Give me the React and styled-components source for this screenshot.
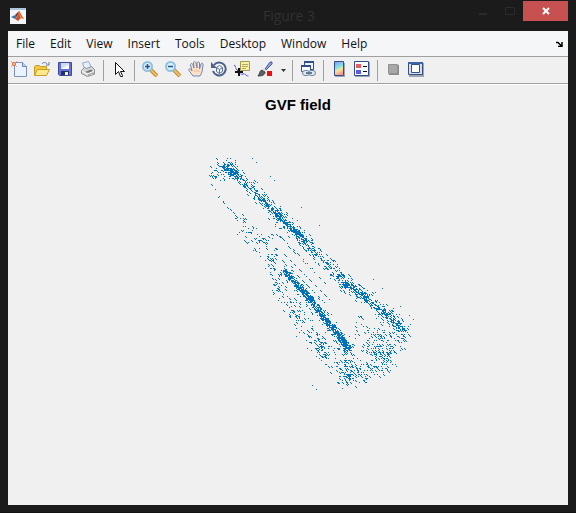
import React from "react";
import styled, { createGlobalStyle } from "styled-components";

const menus = ["File", "Edit", "View", "Insert", "Tools", "Desktop", "Window", "Help"];

/* small seeded generator so that the field looks the same on every load */
const createRandom = (seed) => () => {
  seed = (seed * 1664525 + 1013904223) % 4294967296;
  return seed / 4294967296;
};

/* each band: its points, the spread across it, the number of arrows */
const bands = [
  { points: [[44, 15], [58, 24], [95, 61], [127, 91]], spread: 4, count: 330 },
  { points: [[48, 12], [95, 59], [127, 91]], spread: 10, count: 200 },
  { points: [[95, 61], [127, 91]], spread: 5, count: 80 },
  { points: [[127, 91], [150, 114], [168, 134]], spread: 8, count: 170 },
  { points: [[165, 132], [190, 149], [225, 179]], spread: 5, count: 260 },
  { points: [[165, 131], [190, 149], [228, 181]], spread: 12, count: 150 },
  { points: [[106, 120], [119, 134], [134, 152], [147, 169], [162, 187], [171, 199]], spread: 4, count: 620 },
  { points: [[104, 117], [134, 152], [172, 200]], spread: 9, count: 150 },
  { points: [[36, 18], [60, 22]], spread: 13, count: 75 },
  { points: [[34, 12], [32, 24], [38, 29]], spread: 3, count: 12 },
  { points: [[34, 33], [40, 46], [50, 57], [60, 65]], spread: 3, count: 12 },
  { points: [[60, 65], [70, 82], [84, 94], [96, 108]], spread: 11, count: 75 },
  { points: [[92, 108], [99, 136], [116, 162], [136, 190], [148, 206]], spread: 9, count: 105 },
  { points: [[112, 158], [136, 190], [153, 205]], spread: 13, count: 90 },
  { points: [[150, 203], [164, 222], [174, 232]], spread: 14, count: 65 },
  { points: [[166, 226], [193, 222], [212, 206]], spread: 13, count: 105 },
  { points: [[170, 196], [172, 226]], spread: 14, count: 80 },
  { points: [[214, 204], [227, 188], [226, 176]], spread: 8, count: 45 },
  { points: [[190, 206], [210, 190]], spread: 18, count: 115 },
  { points: [[176, 176], [220, 186]], spread: 19, count: 60 },
  { points: [[86, 90], [102, 78]], spread: 8, count: 14 },
];

/* start of each diagonal streak between the edges, and its length */
const streaks = [
  [104, 88, 34], [110, 96, 44], [106, 104, 46], [104, 110, 46],
  [120, 93, 40], [96, 128, 30], [95, 134, 30], [104, 150, 30],
];

const strays = [
  [74, 8], [78, 12], [92, 26], [96, 30], [123, 57], [141, 75], [195, 129],
  [204, 138], [222, 156], [231, 165], [235, 169], [134, 235], [138, 239],
];

const buildField = () => {
  const random = createRandom(29);
  const pixels = new Set();
  const mark = (x, y) => pixels.add(`M${x} ${y}h1v1h-1z`);

  bands.forEach(({ points, spread, count }) => {
    for (let i = 0; i < count; i++) {
      const t = random() * (points.length - 1);
      const k = Math.floor(t);
      const [ax, ay] = points[k];
      const [bx, by] = points[k + 1];
      const length = Math.hypot(bx - ax, by - ay);
      const side = (random() + random() - 1) * spread;
      const x = ax + (bx - ax) * (t - k) + ((by - ay) / length) * side;
      const y = ay + (by - ay) * (t - k) - ((bx - ax) / length) * side;
      /* the wide bands are thin enough for the rows of the arrows to show */
      const step = spread > 6 ? 2 : 1;
      const column = Math.round(x);
      const row = Math.round(y / step) * step;
      mark(column, row);
      if (random() > 0.6) mark(column + 1, row + 1);
    }
  });

  streaks.forEach(([x, y, length]) => {
    for (let i = 0; i < length; i++) {
      if (i % 5 < 3 && random() > 0.3) mark(x + i, y + i);
    }
  });

  strays.forEach(([x, y]) => mark(x, y));
  return [...pixels].join("");
};

const fieldPath = buildField();

const MatlabLogo = () => (
  <svg width="16" height="16" viewBox="0 0 16 16" aria-hidden="true">
    <path d="M0 0h16v16H0z" fill="#f3f5f7" />
    <path d="M0 0h16v2H0z" fill="#a9c4dc" />
    <path d="M1 9l4-2 2 2-2 2z" fill="#3b78a8" />
    <path d="M5 7l4-4-2 6z" fill="#6e3a3a" />
    <path d="M5 11l2-2 2-6c1 0 2 4 5 8l-3-1-3 3z" fill="#d5532a" />
    <path d="M9 3c1 1 1 5 4 8l-3-2z" fill="#f09a3c" />
  </svg>
);

const NewIcon = () => (
  <svg width="16" height="16" viewBox="0 0 16 16" aria-hidden="true">
    <path d="M3.5 1.5h8l4 4v10h-12z" fill="#eaf3ff" stroke="#7d93bd" />
    <path d="M11.5 1.5v4h4" fill="#c3d7f5" stroke="#6d85b5" />
    <path d="M0 0l2 2M6 0L4 2M0 6l2-2M6 6L4 4" stroke="#f0a080" />
    <circle cx="3" cy="3" r="1.5" fill="#ffd9a0" stroke="#df6434" />
  </svg>
);

const OpenIcon = () => (
  <svg width="16" height="16" viewBox="0 0 16 16" aria-hidden="true">
    <path d="M.5 14.5v-9l1-1h4l1 1h6v3" fill="#f1c83f" stroke="#c39c2a" />
    <path d="M.5 14.5l3-6h12l-3 6z" fill="#ffe98a" stroke="#c99d26" />
    <path d="M8 3c1-2 4-2 5 0m2-2v3h-3" fill="none" stroke="#6178a3" />
  </svg>
);

const SaveIcon = () => (
  <svg width="16" height="16" viewBox="0 0 16 16" aria-hidden="true">
    <path d="M1.5 1.5h13v13h-12l-1-1z" fill="#6672d4" stroke="#3d499c" />
    <path d="M4 2h8v6H4z" fill="#d0dbfa" />
    <path d="M4 8l8-5v5z" fill="#f8faff" />
    <path d="M4 10h8v4H4z" fill="#263267" />
    <path d="M8 11h3v3H8z" fill="#f2f3fc" />
  </svg>
);

const PrintIcon = () => (
  <svg width="16" height="16" viewBox="0 0 16 16" aria-hidden="true">
    <path d="M4.5 8l-2-6 6-1.5 3 6" fill="#e5f0ff" stroke="#9aa9c4" />
    <path d="M1.5 9.5l3-3 2 1 5-2 3 3v4l-7 3-6-3z" fill="#d4d5d6" stroke="#8d8f91" />
    <path d="M2 10l5 3 7-3" fill="none" stroke="#fff" />
    <path d="M5 11l6-2.5 2 1.5-5 2z" fill="#74777c" />
    <path d="M8 14l5-2 2 1-6 2z" fill="#f5f5f5" stroke="#9b9b9b" />
  </svg>
);

const PointerIcon = () => (
  <svg width="16" height="16" viewBox="0 0 16 16" aria-hidden="true">
    <path d="M4.5 1.5v12l3-3 2 5h2v-1l-2-4h4z" fill="#fff" stroke="#111" />
  </svg>
);

const ZoomIcon = ({ plus }) => (
  <svg width="16" height="16" viewBox="0 0 16 16" aria-hidden="true">
    <path d="M9 9l6 6" stroke="#b88a48" strokeWidth="4" />
    <path d="M9 9l6 6" stroke="#f4be55" strokeWidth="2" />
    <circle cx="5.5" cy="5.5" r="4.5" fill="#d8f3ff" stroke="#8fc0e0" strokeWidth="2" />
    <path d={plus ? "M3 5.5h5M5.5 3v5" : "M3 5.5h5"} stroke="#2f4c96" strokeWidth="1.5" />
  </svg>
);

const HandIcon = () => (
  <svg width="16" height="16" viewBox="0 0 16 16" aria-hidden="true">
    <path
      d="M5 15L1 9.5C0 8 2 7 3 8.5L4 10 2.5 4c0-2 2-2 2.5 0l1 3-.5-5c0-2 2-2 2.5 0l1 5V2c.5-2 2.5-1 2.5 0v6l1.5-5c1-1.5 2.5-.5 2 1L14 11l-2 4z"
      fill="#ffe2c5"
      stroke="#6d88b8"
    />
    <path d="M6 9l1 2M9 8v3M11 9v2" stroke="#e8bd9c" />
  </svg>
);

const RotateIcon = () => (
  <svg width="16" height="16" viewBox="0 0 16 16" aria-hidden="true">
    <path d="M3 4a6.5 6.5 0 1 1-1 6" fill="none" stroke="#4c6389" strokeWidth="2" />
    <path d="M0 1v6h6z" fill="#4c6389" />
    <path d="M5.5 6.5l3-2 3 2v4l-3 2-3-2zm0 0l3 2 3-2m-3 2v4" fill="#edf4fc" stroke="#5b7196" />
  </svg>
);

const DataCursorIcon = () => (
  <svg width="16" height="16" viewBox="0 0 16 16" aria-hidden="true">
    <path d="M6.5.5h9v9h-9z" fill="#f8efa0" stroke="#a19d52" />
    <path d="M8 3.5h6M8 5.5h6M8 7.5h4" stroke="#b6ab5c" />
    <path d="M0 4c2 1 1 3 3 5s3 5 6 4 3 3 6 2" fill="none" stroke="#2c2cf0" strokeDasharray="3 1" />
    <path d="M1 11h8M5 7v8" stroke="#111" strokeWidth="2" />
  </svg>
);

const BrushIcon = () => (
  <svg width="16" height="16" viewBox="0 0 16 16" aria-hidden="true">
    <path d="M8 8l5-7h2v2L9 9z" fill="#8ea2e2" stroke="#4d5da3" />
    <path d="M1 15c2-2 1-5 4-6l3 2c0 3-3 4-7 4z" fill="#5f6163" stroke="#404244" />
    <path d="M6 8l3 2" stroke="#dedede" strokeWidth="2" />
    <path d="M10 10h5v5h-5z" fill="#f00d0d" />
  </svg>
);

const LinkIcon = () => (
  <svg width="16" height="16" viewBox="0 0 16 16" aria-hidden="true">
    <path d="M4.5.5h9v8h-9z" fill="#eef3fb" stroke="#344f88" />
    <path d="M4 0h10v2H4z" fill="#344f88" />
    <path d="M1.5 4.5h9v6h-9z" fill="#f7fbff" stroke="#344f88" />
    <path d="M1 4h10v2H1z" fill="#344f88" />
    <rect x="2.5" y="9.5" width="7" height="5" rx="2.5" fill="#dce6ef" stroke="#7289a1" />
    <rect x="8.5" y="9.5" width="7" height="5" rx="2.5" fill="#dce6ef" stroke="#7289a1" />
    <path d="M6 12h6" stroke="#637b93" strokeWidth="2" />
  </svg>
);

const ColorbarIcon = () => (
  <svg width="16" height="16" viewBox="0 0 16 16" aria-hidden="true">
    <defs>
      <linearGradient id="colorbar" x2="0.3" y2="1">
        <stop offset="0" stopColor="#8f8ff0" />
        <stop offset="0.45" stopColor="#7fe0e6" />
        <stop offset="0.7" stopColor="#f4e69c" />
        <stop offset="1" stopColor="#f49b91" />
      </linearGradient>
    </defs>
    <path d="M4 2h10v14H4z" fill="#9ca5b3" />
    <path d="M3.5.5h9v14h-9z" fill="url(#colorbar)" stroke="#344f88" />
  </svg>
);

const LegendIcon = () => (
  <svg width="16" height="16" viewBox="0 0 16 16" aria-hidden="true">
    <path d="M1 1h15v15H1z" fill="#9ca5b3" />
    <path d="M.5.5h14v14H.5z" fill="#f8fbff" stroke="#344f88" />
    <path d="M2 3h5v4H2z" fill="#e75d5d" />
    <path d="M2 9h5v4H2z" fill="#5c5ce8" />
    <path d="M9 5.5h4M9 10.5h4" stroke="#111" />
  </svg>
);

const HideToolsIcon = () => (
  <svg width="16" height="16" viewBox="0 0 16 16" aria-hidden="true">
    <path d="M4 4h10v10H4z" fill="#8a8a8a" />
    <path d="M3.5 3.5h9v9h-9z" fill="#a8a8a8" stroke="#929292" />
  </svg>
);

const ShowToolsIcon = () => (
  <svg width="16" height="16" viewBox="0 0 16 16" aria-hidden="true">
    <path d="M1 2h15v14H1z" fill="#9ca5b3" />
    <path d="M.5 1.5h14v12H.5z" fill="#d9dedf" stroke="#344f88" />
    <path d="M0 1h15v2H0z" fill="#3e62a4" />
    <path d="M3.5 3.5h8v8h-8z" fill="#fff" stroke="#344f88" />
  </svg>
);

const toolGroups = [
  [["New Figure", <NewIcon />], ["Open File", <OpenIcon />], ["Save Figure", <SaveIcon />], ["Print Figure", <PrintIcon />]],
  [["Edit Plot", <PointerIcon />]],
  [
    ["Zoom In", <ZoomIcon plus />],
    ["Zoom Out", <ZoomIcon />],
    ["Pan", <HandIcon />],
    ["Rotate 3D", <RotateIcon />],
    ["Data Cursor", <DataCursorIcon />],
    ["Brush", <BrushIcon />, true],
  ],
  [["Link Plot", <LinkIcon />]],
  [["Insert Colorbar", <ColorbarIcon />], ["Insert Legend", <LegendIcon />]],
  [["Hide Plot Tools", <HideToolsIcon />], ["Show Plot Tools", <ShowToolsIcon />]],
];

const App = () => (
  <>
    <GlobalStyle />
    <Window>
      <TitleBar>
        <MatlabLogo />
        <WindowTitle>Figure 3</WindowTitle>
        <WindowControls>
          <WindowButton aria-label="Minimize">
            <svg width="10" height="10" viewBox="0 0 10 10" aria-hidden="true">
              <path d="M1 7h8v2H1z" fill="#2b2b2b" />
            </svg>
          </WindowButton>
          <WindowButton aria-label="Maximize">
            <svg width="10" height="10" viewBox="0 0 10 10" aria-hidden="true">
              <path d="M.5 1.5h9v7h-9z" fill="none" stroke="#2b2b2b" />
            </svg>
          </WindowButton>
          <CloseButton aria-label="Close">
            <svg width="8" height="8" viewBox="0 0 8 8" aria-hidden="true">
              <path d="M1 1l6 6M7 1L1 7" stroke="#fff" strokeWidth="2" />
            </svg>
          </CloseButton>
        </WindowControls>
      </TitleBar>
      <MenuBar>
        {menus.map((menu) => (
          <MenuButton key={menu}>{menu}</MenuButton>
        ))}
        <DockButton aria-label="Dock Figure">
          <svg width="7" height="6" viewBox="0 0 7 6" aria-hidden="true">
            <path d="M0 1.5h2l3 3M6 1v4.5H2" fill="none" stroke="#000" strokeWidth="1.5" />
          </svg>
        </DockButton>
      </MenuBar>
      <ToolBar>
        {toolGroups.map((tools, index) => (
          <ToolGroup key={index}>
            {tools.map(([label, icon, hasMenu]) => (
              <React.Fragment key={label}>
                <ToolButton aria-label={label}>{icon}</ToolButton>
                {hasMenu && (
                  <ArrowButton aria-label={`${label} options`}>
                    <svg width="5" height="3" viewBox="0 0 5 3" aria-hidden="true">
                      <path d="M0 0h5L2.5 3z" fill="#333" />
                    </svg>
                  </ArrowButton>
                )}
              </React.Fragment>
            ))}
          </ToolGroup>
        ))}
      </ToolBar>
      <Figure>
        <PlotTitle>GVF field</PlotTitle>
        <svg width="240" height="250" viewBox="0 0 240 250" shapeRendering="crispEdges" aria-hidden="true">
          <path d={fieldPath} fill="#0072bd" />
        </svg>
      </Figure>
    </Window>
  </>
);

export default App;

const GlobalStyle = createGlobalStyle`
  body {
    margin: 0;
    background-color: #1b1b1b;
  }

  svg {
    display: block;
    flex: none;
  }
`;

const Window = styled.div`
  box-sizing: border-box;
  min-height: 100vh;
  display: flex;
  flex-direction: column;
  padding: 0 8px 7px;
  background-color: #1b1b1b;
  border-bottom: 1px solid #111;
  font-family: "Open Sans", "Noto Sans", sans-serif;
`;

const TitleBar = styled.header`
  height: 31px;
  display: grid;
  grid-template-columns: 1fr auto 1fr;
  align-items: center;
  padding-left: 2px;
`;

const WindowTitle = styled.h1`
  margin: 0;
  font-size: 14px;
  font-weight: 400;
  line-height: 20px;
  color: #303030;
`;

const WindowControls = styled.div`
  display: flex;
  justify-content: flex-end;
  align-self: start;
  padding-top: 1px;
`;

const WindowButton = styled.button`
  width: 27px;
  height: 20px;
  display: flex;
  align-items: center;
  justify-content: center;
  padding: 0;
  border: 0;
  background: none;
`;

const CloseButton = styled(WindowButton)`
  width: 45px;
  background-color: #c75050;
`;

const MenuBar = styled.nav`
  height: 25px;
  display: flex;
  align-items: center;
  background-color: #f5f6f8;
`;

const MenuButton = styled.button`
  padding: 0 7px 0 8px;
  border: 0;
  background: none;
  font-family: inherit;
  font-size: 12px;
  line-height: 24px;
  color: #111;
`;

const DockButton = styled.button`
  margin-left: auto;
  padding: 0 5px;
  border: 0;
  background: none;
`;

const ToolBar = styled.div`
  height: 26px;
  display: flex;
  align-items: center;
  background-color: #f0f0f0;
  border-top: 1px solid #a0a0a0;
  border-bottom: 1px solid #a0a0a0;
`;

const ToolGroup = styled.div`
  display: flex;
  align-items: center;

  & + &::before {
    content: "";
    width: 1px;
    height: 21px;
    margin: 0 4px 0 3px;
    background-color: #a0a0a0;
  }
`;

const ToolButton = styled.button`
  width: 23px;
  height: 22px;
  padding: 0 3px 2px;
  border: 0;
  background: none;
`;

const ArrowButton = styled.button`
  width: 12px;
  height: 22px;
  padding: 0 4px;
  border: 0;
  background: none;
`;

const Figure = styled.main`
  flex: 1;
  display: flex;
  flex-direction: column;
  align-items: center;
  padding: 10px 0 0 20px;
  background-color: #f0f0f0;
  border-top: 1px solid #fff;
`;

const PlotTitle = styled.h2`
  margin: 0 0 35px;
  font-family: "Liberation Sans", Arial, sans-serif;
  font-size: 15px;
  font-weight: 700;
  line-height: 20px;
  color: #000;
`;
